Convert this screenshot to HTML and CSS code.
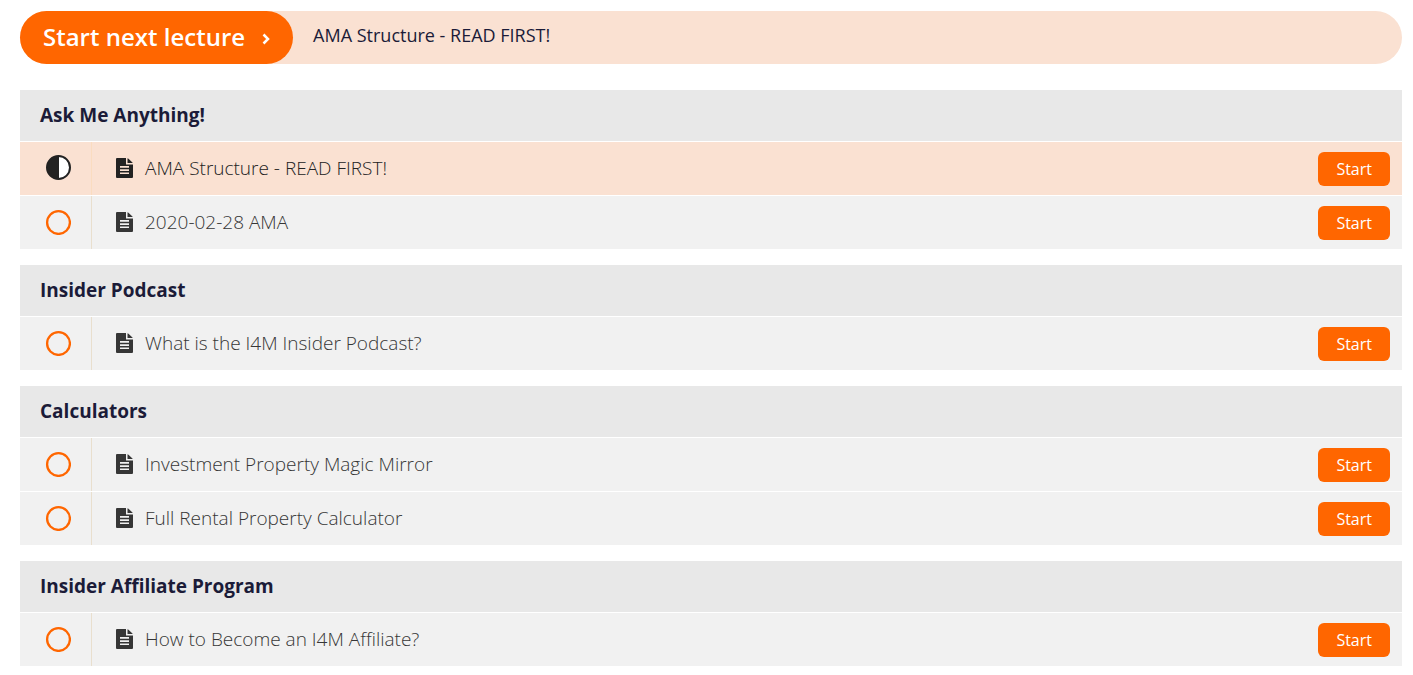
FILE: index.html
```html
<!DOCTYPE html>
<html lang="en">
<head>
  <meta charset="UTF-8">
  <meta name="viewport" content="width=device-width, initial-scale=1.0">
  <title>Course Curriculum</title>
  <link rel="stylesheet" href="styles.css">
</head>
<body>
  <!-- Shared icons -->
  <svg class="sprite" width="0" height="0" aria-hidden="true">
    <symbol id="icon-file" viewBox="0 0 17 20">
      <path fill-rule="evenodd" d="M1 0h9v6.500h7V19a1 1 0 0 1-1 1H1a1 1 0 0 1-1-1V1a1 1 0 0 1 1-1zM4 8v1.700h9V8zM4 11.200v1.700h9v-1.700zM4 14.400v1.700h9v-1.700z"/>
      <path d="M11.500 0.200c.4.100.7.300 1 .6l3.700 3.400c.3.300.5.600.6.900h-5.300z"/>
    </symbol>
    <symbol id="icon-circle" viewBox="0 0 26 26">
      <circle cx="13.500" cy="13.500" r="11.400" fill="none" stroke="currentColor" stroke-width="2.300"/>
    </symbol>
    <symbol id="icon-half" viewBox="0 0 26 26">
      <circle cx="13.500" cy="12.500" r="11.500" fill="#fff" stroke="currentColor" stroke-width="2"/>
      <path d="M14 1v23h-.5a11.500 11.500 0 0 1 0-23z"/>
    </symbol>
  </svg>

  <main class="curriculum">
    <div class="next-lecture">
      <button type="button" class="next-button">Start next lecture
        <svg class="next-arrow" viewBox="0 0 8 12" aria-hidden="true"><path d="M1.500 1.500 6 6l-4.500 4.500"/></svg>
      </button>
      <span class="next-title">AMA Structure - READ FIRST!</span>
    </div>

    <section class="section">
      <h2 class="section-title">Ask Me Anything!</h2>
      <ul class="lectures">
        <li class="lecture next">
          <span class="status"><svg class="status-icon"><use href="#icon-half"/></svg></span>
          <a class="lecture-link" href="#"><svg class="file-icon"><use href="#icon-file"/></svg>AMA Structure - READ FIRST!</a>
          <button type="button" class="start-button">Start</button>
        </li>
        <li class="lecture">
          <span class="status"><svg class="status-icon"><use href="#icon-circle"/></svg></span>
          <a class="lecture-link" href="#"><svg class="file-icon"><use href="#icon-file"/></svg>2020-02-28 AMA</a>
          <button type="button" class="start-button">Start</button>
        </li>
      </ul>
    </section>

    <section class="section">
      <h2 class="section-title">Insider Podcast</h2>
      <ul class="lectures">
        <li class="lecture">
          <span class="status"><svg class="status-icon"><use href="#icon-circle"/></svg></span>
          <a class="lecture-link" href="#"><svg class="file-icon"><use href="#icon-file"/></svg>What is the I4M Insider Podcast?</a>
          <button type="button" class="start-button">Start</button>
        </li>
      </ul>
    </section>

    <section class="section">
      <h2 class="section-title">Calculators</h2>
      <ul class="lectures">
        <li class="lecture">
          <span class="status"><svg class="status-icon"><use href="#icon-circle"/></svg></span>
          <a class="lecture-link" href="#"><svg class="file-icon"><use href="#icon-file"/></svg>Investment Property Magic Mirror</a>
          <button type="button" class="start-button">Start</button>
        </li>
        <li class="lecture">
          <span class="status"><svg class="status-icon"><use href="#icon-circle"/></svg></span>
          <a class="lecture-link" href="#"><svg class="file-icon"><use href="#icon-file"/></svg>Full Rental Property Calculator</a>
          <button type="button" class="start-button">Start</button>
        </li>
      </ul>
    </section>

    <section class="section">
      <h2 class="section-title">Insider Affiliate Program</h2>
      <ul class="lectures">
        <li class="lecture">
          <span class="status"><svg class="status-icon"><use href="#icon-circle"/></svg></span>
          <a class="lecture-link" href="#"><svg class="file-icon"><use href="#icon-file"/></svg>How to Become an I4M Affiliate?</a>
          <button type="button" class="start-button">Start</button>
        </li>
      </ul>
    </section>
  </main>
</body>
</html>
```

FILE: styles.css
```css
* {
  box-sizing: border-box;
}
body {
  margin: 0;
  background-color: #fff;
  color: #1b1b38;
  font-family: "Open Sans", sans-serif;
}
button {
  border: none;
  background-color: #ff6600;
  color: #fff;
  font-family: inherit;
  cursor: pointer;
}
button:hover {
  background-color: #e65c00;
}
.sprite {
  position: absolute;
}
.curriculum {
  padding: 11px 11px 8px 20px;
}
.next-lecture {
  display: flex;
  align-items: center;
  margin-bottom: 26px;
  border-radius: 27px;
  background-color: #fae1d2;
}
.next-button {
  display: flex;
  align-items: center;
  gap: 17px;
  padding: 9px 23px 11px;
  border-radius: 27px;
  font-size: 24px;
  font-weight: 600;
  line-height: 33px;
}
.next-arrow {
  width: 8px;
  height: 12px;
  margin-top: 4px;
  fill: none;
  stroke: #fff;
  stroke-width: 2.5;
}
.next-title {
  padding: 0 20px 6px;
  font-size: 18px;
  line-height: 26px;
}
.section {
  margin-bottom: 16px;
}
.section-title {
  margin: 0;
  padding: 12px 20px 13px;
  background-color: #e8e8e8;
  font-size: 19px;
  font-weight: 700;
  line-height: 26px;
}
.lectures {
  margin: 0;
  padding: 0;
  list-style: none;
}
.lecture {
  display: flex;
  align-items: center;
  margin-top: 1px;
  padding-right: 12px;
  background-color: #f1f1f1;
  color: #363636;
}
.lecture.next {
  background-color: #fae1d2;
  color: #222;
}
.status {
  display: flex;
  padding: 13px 20px 14px 25px;
  border-right: 1px solid #e9dfce;
  color: #ff6600;
}
.next .status {
  border-color: #fadcc0;
  color: #222;
}
.status-icon {
  width: 26px;
  height: 26px;
  fill: currentColor;
}
.lecture-link {
  display: flex;
  flex: 1;
  align-items: center;
  gap: 12px;
  padding: 0 12px 2px 24px;
  color: inherit;
  font-size: 19px;
  font-weight: 300;
  line-height: 26px;
  text-decoration: none;
}
.file-icon {
  width: 17px;
  height: 20px;
  fill: currentColor;
}
.start-button {
  padding: 5px 18px;
  border-radius: 6px;
  font-size: 16px;
  line-height: 24px;
}
```
